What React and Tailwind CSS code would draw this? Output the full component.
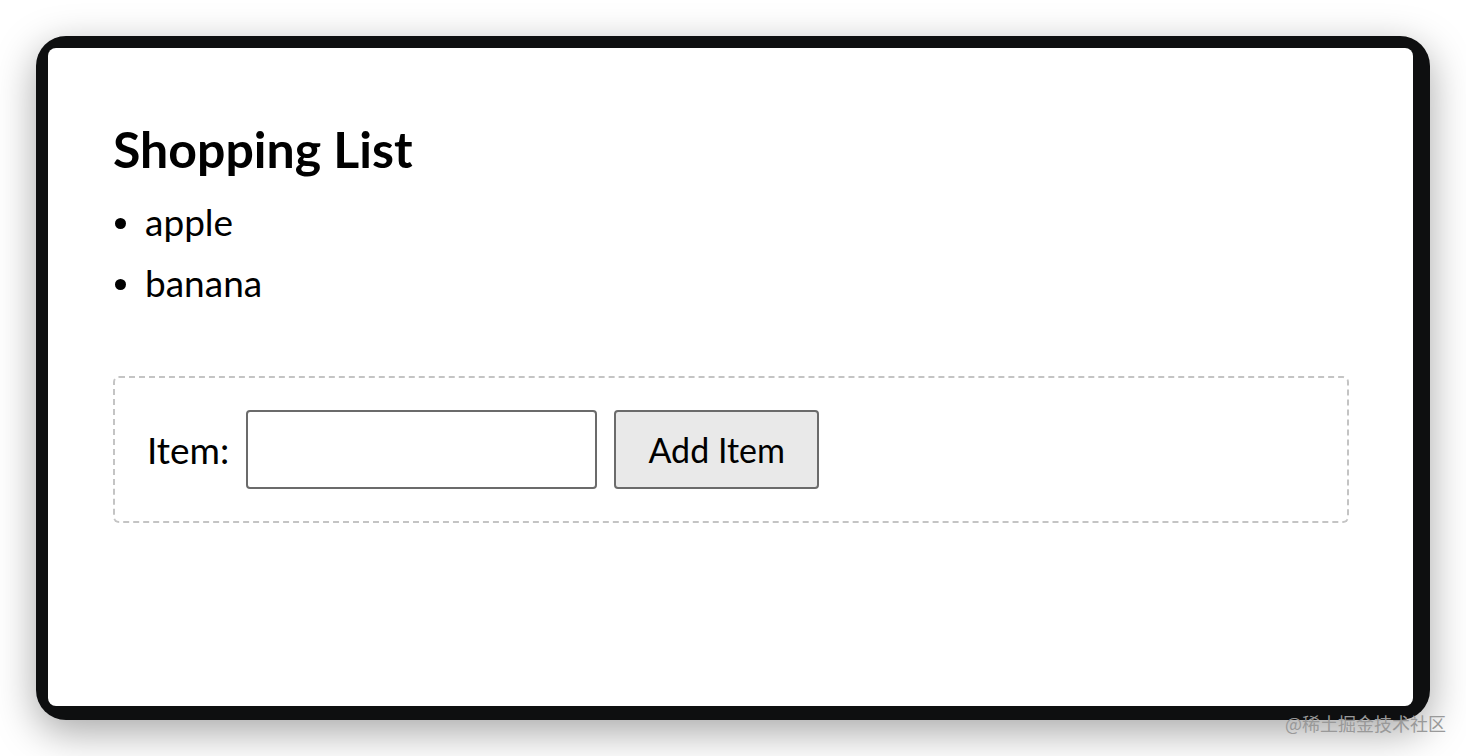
export default function App() {
  return (
    <div className="relative w-[1466px] h-[756px] bg-white overflow-hidden" style={{ fontFamily: 'Lato, "Noto Sans", sans-serif' }}>
      <div className="ml-[36px] mt-[36px] w-[1394px] h-[684px] rounded-[30px] bg-[#0e0f10] pl-[12px] pt-[12px] pr-[17px] pb-[14px] shadow-[0_12px_40px_rgba(0,0,0,0.35)]">
        <div className="w-full h-full bg-white rounded-[8px] pl-[65px] pr-[64px] pt-[71px]">
          <h2 className="text-[50px] leading-[60px] font-bold text-black">Shopping List</h2>
          <ul className="mt-[12px] text-[37px] leading-[61px] text-black">
            <li className="flex items-center">
              <span className="w-[11px] h-[11px] rounded-full bg-black ml-[2px] mr-[19px] mt-[4px]"></span>
              apple
            </li>
            <li className="flex items-center">
              <span className="w-[11px] h-[11px] rounded-full bg-black ml-[2px] mr-[19px] mt-[4px]"></span>
              banana
            </li>
          </ul>
          <div className="mt-[63px] h-[147px] border-2 border-dashed border-[#c4c4c4] rounded-[6px] pl-[32px] flex items-center">
            <span className="text-[37px] text-black">Item:</span>
            <div className="ml-[17px] w-[351px] h-[79px] border-2 border-[#6b6b6b] rounded-[4px] bg-white"></div>
            <button className="ml-[17px] w-[205px] h-[79px] border-2 border-[#6b6b6b] rounded-[4px] bg-[#e9e9e9] text-[34px] text-black" style={{ fontFamily: 'Lato, "Noto Sans", sans-serif' }}>Add Item</button>
          </div>
        </div>
      </div>
      <div className="absolute left-[1285px] top-[712px] text-[18px] leading-[22px] text-[#999999]" style={{ fontFamily: '"Noto Sans CJK SC", sans-serif' }}>@稀土掘金技术社区</div>
    </div>
  );
}
